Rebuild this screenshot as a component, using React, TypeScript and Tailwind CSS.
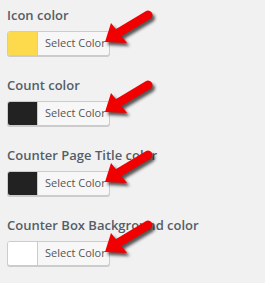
import React from "react";

function Arrow() {
  return (
    <svg
      className="absolute left-[85px] top-[-22px] pointer-events-none"
      width="70"
      height="50"
      viewBox="85 -22 70 50"
    >
      <defs>
        <filter id="sh" x="-50%" y="-50%" width="200%" height="200%">
          <feGaussianBlur stdDeviation="1.6" />
        </filter>
      </defs>
      <g transform="translate(2.5,3)" filter="url(#sh)" opacity="0.75">
        <line x1="141" y1="-16" x2="111" y2="2" stroke="#222" strokeWidth="9" strokeLinecap="round" />
        <polygon points="98,11 104,-8 120,12" fill="#222" />
      </g>
      <line x1="141" y1="-16" x2="111" y2="2" stroke="#f00000" strokeWidth="9" strokeLinecap="round" />
      <polygon points="98,11 104,-8 120,12" fill="#f00000" />
    </svg>
  );
}

function Row({ label, color }: { label: string; color: string }) {
  return (
    <div className="h-[70px] pl-[7px] pt-[6px]">
      <div className="text-[13px] leading-[18px] font-semibold text-[#555d66]">{label}</div>
      <div className="relative mt-[7px] w-fit">
        <div className="flex h-[25px] w-[103px] rounded-[3px] border border-[#cccccc] bg-[#f7f7f7] shadow-[0_1px_0_#cccccc] overflow-hidden">
          <div className="w-[30px] h-full border-r border-[#cccccc]" style={{ backgroundColor: color }} />
          <div className="flex-1 flex items-center pl-[7px] text-[11px] text-[#555555]">Select Color</div>
        </div>
        <Arrow />
      </div>
    </div>
  );
}

export default function App() {
  return (
    <div className="w-[265px] h-[283px] bg-[#f1f1f1] font-['Open_Sans',sans-serif] overflow-hidden">
      <Row label="Icon color" color="#fdd94c" />
      <Row label="Count color" color="#222222" />
      <Row label="Counter Page Title color" color="#222222" />
      <Row label="Counter Box Background color" color="#ffffff" />
    </div>
  );
}
